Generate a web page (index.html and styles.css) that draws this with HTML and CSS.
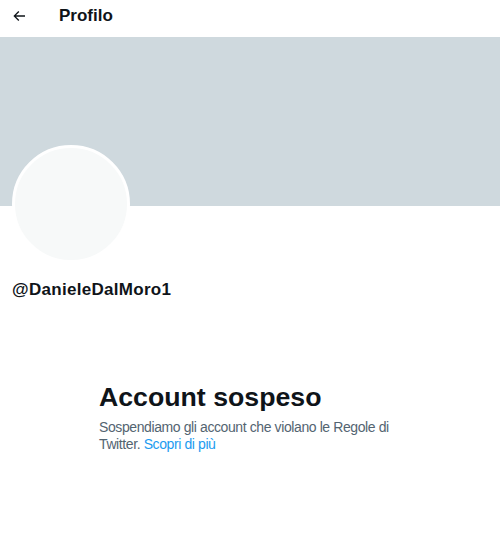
FILE: index.html
```html
<!DOCTYPE html>
<html lang="it">
<head>
<meta charset="utf-8">
<title>Profilo</title>
<link rel="stylesheet" href="styles.css">
</head>
<body>
<div class="page">
  <header class="topbar">
    <span class="back" aria-label="Indietro">
      <svg viewBox="0 0 24 24" width="16" height="16"><path d="M7.414 13l5.043 5.04-1.414 1.42L3.586 12l7.457-7.46 1.414 1.42L7.414 11H21v2H7.414z" fill="#0f1419"/></svg>
    </span>
    <h1 class="title">Profilo</h1>
  </header>
  <div class="banner"></div>
  <div class="profile">
    <div class="avatar"></div>
    <div class="handle">@DanieleDalMoro1</div>
  </div>
  <section class="suspended">
    <h2 class="s-title">Account sospeso</h2>
    <p class="s-text">Sospendiamo gli account che violano le Regole di Twitter. <a class="link" href="#">Scopri di più</a></p>
  </section>
</div>
</body>
</html>
```
FILE: styles.css
```css
* { box-sizing: border-box; }
html, body { margin: 0; padding: 0; background: #ffffff; }
body { font-family: "Liberation Sans", Arial, sans-serif; color: #0f1419; }
.page { width: 500px; }
.topbar { height: 37px; display: flex; align-items: center; padding: 0 0 6px 11px; }
.back { width: 16px; height: 16px; display: flex; }
.title { margin: 0 0 0 32px; font-size: 17px; font-weight: 700; }
.banner { height: 169px; background: #cfd9de; }
.profile { padding: 0 12px; }
.avatar { width: 118px; height: 118px; border-radius: 50%; background: #f7f9f9; border: 3px solid #ffffff; margin-top: -61px; }
.handle { margin-top: 17px; font-size: 17px; font-weight: 700; letter-spacing: 0.3px; }
.suspended { padding: 81px 0 0 99px; }
.s-title { margin: 0; font-size: 26.7px; font-weight: 700; line-height: 32px; }
.s-text { margin: 6px 0 0; width: 294px; font-size: 14px; letter-spacing: -0.4px; line-height: 17px; color: #536471; }
.link { color: #1d9bf0; text-decoration: none; }
```
